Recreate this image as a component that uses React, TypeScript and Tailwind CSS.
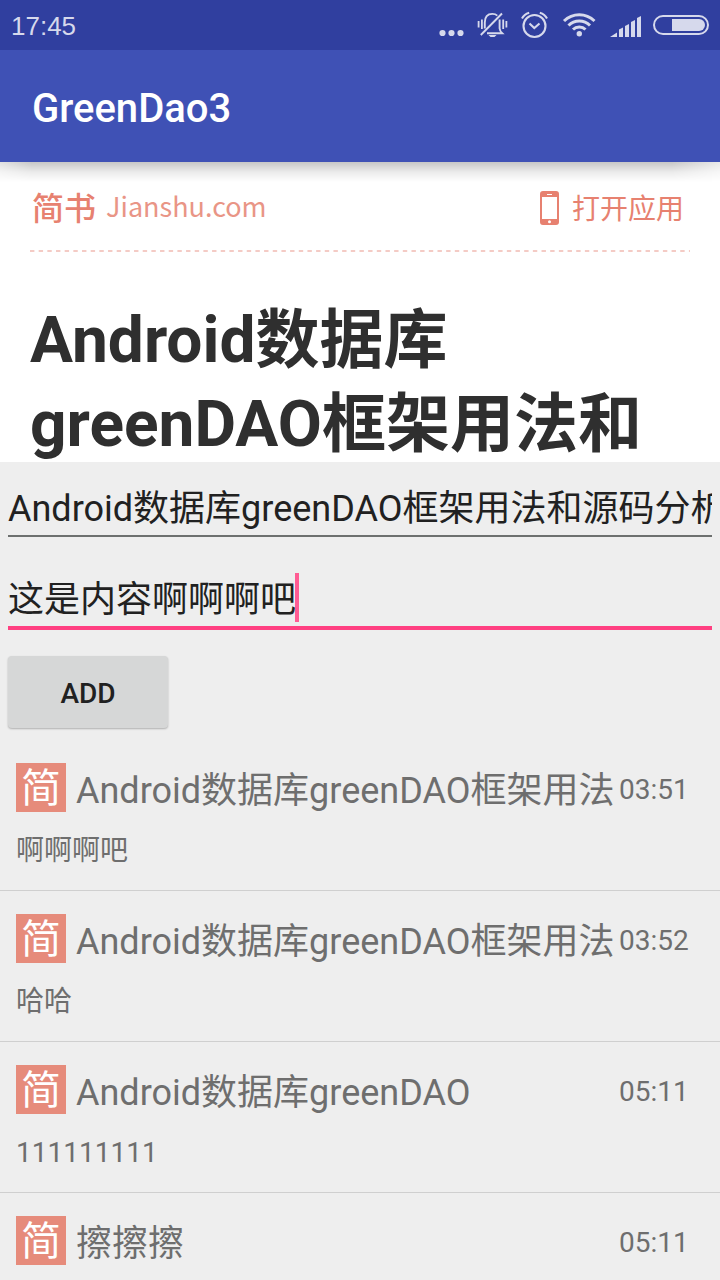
import { useState } from 'react';

const font = "font-[Roboto,'Noto_Sans_CJK_SC',sans-serif]";

const notes = [
  { title: 'Android数据库greenDAO框架用法', content: '啊啊啊吧', time: '03:51' },
  { title: 'Android数据库greenDAO框架用法', content: '哈哈', time: '03:52' },
  { title: 'Android数据库greenDAO', content: '111111111', time: '05:11' },
  { title: '擦擦擦', content: '', time: '05:11' },
];

function MoreIcon() {
  return (
    <svg width="26" height="8" viewBox="0 0 26 8" fill="currentColor" aria-hidden="true">
      <circle cx="4.5" cy="4" r="3.1" />
      <circle cx="13.5" cy="4" r="3.1" />
      <circle cx="22.5" cy="4" r="3.1" />
    </svg>
  );
}

function BellOffIcon() {
  return (
    <svg width="32" height="28" viewBox="0 0 32 28" fill="none" stroke="currentColor" strokeWidth="1.9" aria-hidden="true">
      <path d="M8.8 17.5V11.5Q8.8 2.9 16.3 2.9Q19.5 2.9 21.3 4.6" />
      <path d="M23.6 8.5V17.5Q23.8 20 26.2 22.2H11" />
      <path d="M26 2.5L4.8 24" />
      <path d="M2.6 10V16.5M5.9 8.5V18M27.2 8.5V18M30.4 10V16.5" strokeWidth="1.8" />
      <path d="M12.5 24H20.5L18.5 26H14.5Z" fill="currentColor" stroke="none" />
    </svg>
  );
}

function AlarmIcon() {
  return (
    <svg width="28" height="28" viewBox="0 0 28 28" fill="none" stroke="currentColor" strokeWidth="2.1" aria-hidden="true">
      <circle cx="14.5" cy="15" r="11" />
      <path d="M9.5 12.5L14.3 17L19.5 12.5" />
      <path d="M2 7.5Q4 3.3 9.2 1.8M27 7.5Q25 3.3 19.8 1.8" />
    </svg>
  );
}

function WifiIcon() {
  return (
    <svg width="34" height="26" viewBox="0 0 34 26" fill="none" stroke="currentColor" strokeWidth="3" aria-hidden="true">
      <path d="M2 9Q8.5 2.8 17.3 2.8Q26 2.8 32.5 9" />
      <path d="M6.5 13.5Q11 9 17.3 9Q23.5 9 28 13.5" />
      <path d="M11 17.5Q13.6 15 17.3 15Q21 15 23.5 17.5" />
      <circle cx="17.3" cy="21.7" r="2.7" fill="currentColor" stroke="none" />
    </svg>
  );
}

function SignalIcon() {
  return (
    <svg width="32" height="22" viewBox="0 0 32 22" fill="currentColor" aria-hidden="true">
      <path d="M0 21L7 16.5V21ZM9 21V13.5L13 11.5V21ZM15 21V10L19 8V21ZM21 21V6L25 4V21ZM27 21V2L31 0V21Z" />
    </svg>
  );
}

function BatteryIcon() {
  return (
    <svg width="56" height="22" viewBox="0 0 56 22" fill="none" aria-hidden="true">
      <rect x="1" y="2" width="54" height="18" rx="9" stroke="currentColor" strokeWidth="2" />
      <path d="M19 5H46A6 6 0 0 1 46 17H19Z" fill="currentColor" />
    </svg>
  );
}

function PhoneIcon() {
  return (
    <svg width="20" height="34" viewBox="0 0 20 34" aria-hidden="true">
      <path
        fillRule="evenodd"
        fill="#e78170"
        d="M3 0H16Q19 0 19 3V31Q19 34 16 34H3Q0 34 0 31V3Q0 0 3 0ZM2 6V28H17V6ZM7 3V4H12V3ZM9.5 29.3A1.5 1.5 0 1 0 9.5 32.3A1.5 1.5 0 1 0 9.5 29.3Z"
      />
    </svg>
  );
}

function StatusBar() {
  return (
    <div className="flex h-[50px] items-center justify-between bg-[#303f9f] px-[11px] text-[#d6d9ec]">
      <span className="pt-[2px] font-['Liberation_Sans',sans-serif] text-[26px] leading-8">17:45</span>
      <div className="flex items-center">
        <div className="mr-3 pt-4"><MoreIcon /></div>
        <div className="mr-3"><BellOffIcon /></div>
        <div className="mr-[14px]"><AlarmIcon /></div>
        <div className="mr-[14px]"><WifiIcon /></div>
        <div className="mr-[11px] pt-1"><SignalIcon /></div>
        <BatteryIcon />
      </div>
    </div>
  );
}

function ArticlePreview() {
  return (
    <article className="h-[300px] overflow-hidden bg-white px-[30px] pt-6">
      <div className="flex h-11 items-center justify-between pr-[6px] text-[#e78170]">
        <a href="#jianshu" className="flex items-center gap-[10px] pb-1 pl-[2px]">
          <span className="font-['Noto_Sans_CJK_SC',sans-serif] text-[32px] leading-10 font-medium">简书</span>
          <span className="font-['Noto_Sans_CJK_SC',sans-serif] text-[27px] leading-10 text-[#e99586]">Jianshu.com</span>
        </a>
        <a href="#open" className="flex items-center gap-3">
          <PhoneIcon />
          <span className="pb-[3px] font-['Noto_Sans_CJK_SC',sans-serif] text-[28px] leading-10">打开应用</span>
        </a>
      </div>
      <svg className="mt-5 block h-[2px] w-full" aria-hidden="true">
        <line x1="0" y1="1" x2="100%" y2="1" stroke="#f4cbc5" strokeWidth="2" strokeDasharray="4.4 4.27" />
      </svg>
      <h2 className="mt-[47px] text-[64px] leading-[84px] font-bold text-[#2f2f2f]">Android数据库greenDAO框架用法和</h2>
    </article>
  );
}

export default function App() {
  const [title, setTitle] = useState('Android数据库greenDAO框架用法和源码分析');
  const [content, setContent] = useState('这是内容啊啊啊吧');

  return (
    <div className={`h-screen overflow-hidden bg-[#eeeeee] ${font}`}>
      <StatusBar />
      <header className="flex h-28 items-center bg-[#3f51b5] px-8 pt-[6px]">
        <h1 className="text-[40px] leading-[48px] font-medium text-white">GreenDao3</h1>
      </header>
      <div className="relative">
        <div className="absolute inset-x-0 top-0 h-5 bg-linear-to-b from-black/22 via-black/8 to-transparent mask-[linear-gradient(to_right,#0008,#000_32px,#000_calc(100%-48px),#0006)]" />
        <ArticlePreview />
      </div>
      <form className="px-2" onSubmit={(e) => e.preventDefault()}>
        <input
          aria-label="Title"
          className="mt-5 block h-[55px] w-full border-b-2 border-[#6d706f] bg-transparent pb-[7px] text-[36px] text-[#212121] outline-none"
          value={title}
          onChange={(e) => setTitle(e.target.value)}
        />
        <div className="relative mt-9">
          <input
            aria-label="Content"
            className="block h-[57px] w-full border-b-4 border-[#ff4081] bg-transparent pb-[7px] text-[36px] text-[#212121] outline-none"
            value={content}
            onChange={(e) => setContent(e.target.value)}
          />
          <span className="absolute top-0 left-[287px] h-[49px] w-1 bg-[#ff5c93]" />
        </div>
        <button
          type="submit"
          className="mt-[26px] block h-[72px] w-40 rounded-sm bg-[#d6d7d7] pt-1 text-[28px] font-medium text-[#212121] shadow-[0_1px_2px_#0004]"
        >
          ADD
        </button>
      </form>
      <ul className="mt-3">
        {notes.map((note, i) => (
          <li key={i} className="border-b border-[#cfcfcf] px-4 pt-[15px] pb-3 text-[#6e6e6e]">
            <div className="flex h-16 items-center">
              <span className="flex h-[49px] w-[50px] shrink-0 items-center justify-center bg-[#e68b7b] pb-1 font-['Noto_Sans_CJK_SC',sans-serif] text-[40px] leading-[44px] text-white">
                简
              </span>
              <span className="ml-[10px] min-w-0 flex-1 overflow-hidden pt-2 text-[36px] leading-[52px] whitespace-nowrap">{note.title}</span>
              <time className="w-[85px] shrink-0 pt-[6px] text-[28px] leading-10">{note.time}</time>
            </div>
            <p className="h-[59px] pt-[5px] text-[28px] leading-[54px]">{note.content}</p>
          </li>
        ))}
      </ul>
    </div>
  );
}
